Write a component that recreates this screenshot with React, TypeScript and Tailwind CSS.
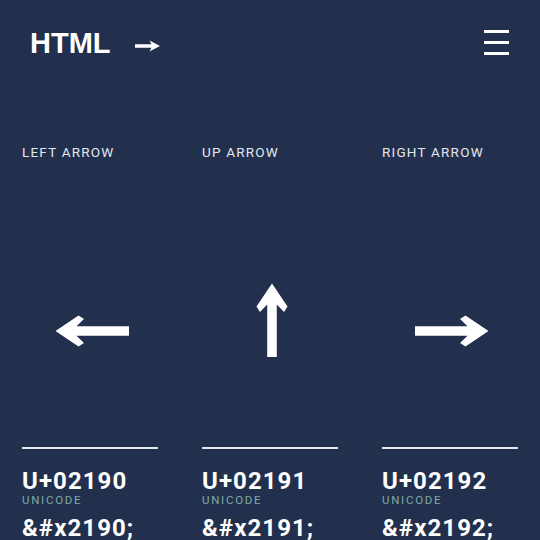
import React from 'react';

interface ArrowItem {
  label: string;
  dir: 'left' | 'up' | 'right';
  code: string;
  hex: string;
}

const items: ArrowItem[] = [
  { label: 'Left Arrow', dir: 'left', code: 'U+02190', hex: '&#x2190;' },
  { label: 'Up Arrow', dir: 'up', code: 'U+02191', hex: '&#x2191;' },
  { label: 'Right Arrow', dir: 'right', code: 'U+02192', hex: '&#x2192;' },
];

// big notched arrow, drawn pointing left then rotated
function BigArrow({ dir }: { dir: ArrowItem['dir'] }) {
  const rotate = dir === 'left' ? '' : dir === 'up' ? 'rotate-90 -translate-y-[11px]' : 'rotate-180';
  return (
    <svg width="74" height="32" viewBox="0 0 74 32" className={`shrink-0 ${rotate}`}>
      <path
        d="M0.5 16 L23.5 0.5 L29 4 L21.5 11.2 L74 11.2 L74 20.8 L21.5 20.8 L29 28 L23.5 31.5 Z"
        fill="#ffffff"
        strokeLinejoin="round"
      />
    </svg>
  );
}

export default function App() {
  return (
    <div className="w-[540px] h-[540px] overflow-hidden bg-[#22304d] text-white font-['Roboto',sans-serif]">
      {/* header */}
      <div className="flex items-start justify-between pl-[30px] pr-[31px] pt-[29px]">
        <div className="flex items-center gap-[24px]">
          <span className="text-[29px] leading-none font-bold font-['Liberation_Sans',Arial,sans-serif]">HTML</span>
          <svg width="25" height="12" viewBox="0 0 25 12" className="mt-[5px]">
            <path d="M0 4.2 L16.5 4.2 L14.5 0.5 L25 6 L14.5 11.5 L16.5 7.8 L0 7.8 Z" fill="#ffffff" />
          </svg>
        </div>
        <button className="flex flex-col gap-[8.5px] mt-[1px]">
          <span className="block w-[25px] h-[2.5px] bg-white" />
          <span className="block w-[25px] h-[2.5px] bg-white" />
          <span className="block w-[25px] h-[2.5px] bg-white" />
        </button>
      </div>

      {/* arrows */}
      <div className="grid grid-cols-3 gap-[44px] px-[22px] mt-[86px]">
        {items.map((it) => (
          <div key={it.dir} className="flex flex-col">
            <h3 className="text-[13.5px] leading-[16px] uppercase tracking-[0.09em] text-[#e2e6ef]">{it.label}</h3>
            <div className="flex h-[74px] items-center justify-center pl-[4px] mt-[134px]">
              <BigArrow dir={it.dir} />
            </div>
            <div className="mt-[79px] border-t-2 border-[#e6e9ef] pt-[20px]">
              <div className="text-[24px] leading-none font-bold tracking-[0.045em]">{it.code}</div>
              <div className="mt-[1px] text-[11.5px] leading-[13px] uppercase tracking-[0.15em] text-[#7eaaa7]">Unicode</div>
              <div className="mt-[9px] text-[24px] leading-none font-bold tracking-[0.045em]">{it.hex}</div>
            </div>
          </div>
        ))}
      </div>
    </div>
  );
}
